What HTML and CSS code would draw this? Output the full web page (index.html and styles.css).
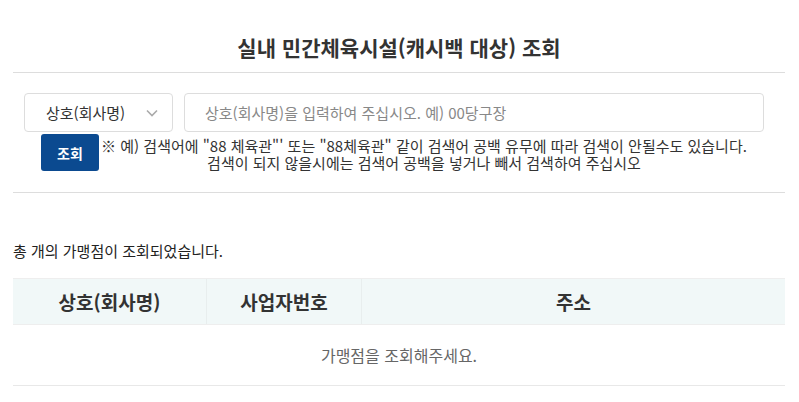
FILE: index.html
```html
<!DOCTYPE html>
<html lang="ko">
<head>
  <meta charset="UTF-8">
  <title>실내 민간체육시설(캐시백 대상) 조회</title>
  <link rel="stylesheet" href="styles.css">
</head>
<body>
  <div class="wrap">
    <h1 class="title">실내 민간체육시설(캐시백 대상) 조회</h1>

    <!-- 검색 영역 -->
    <div class="search">
      <div class="search-row">
        <div class="select">
          <span>상호(회사명)</span>
          <svg class="chev" width="12" height="8" viewBox="0 0 12 8"><path d="M1 1.5 L6 6.5 L11 1.5" fill="none" stroke="#aaa" stroke-width="1.6"/></svg>
        </div>
        <input class="keyword" type="text" placeholder="상호(회사명)을 입력하여 주십시오. 예) 00당구장">
      </div>
      <div class="search-foot">
        <button class="btn-search">조회</button>
        <p class="notice">※ 예) 검색어에 "88 체육관"' 또는 "88체육관" 같이 검색어 공백 유무에 따라 검색이 안될수도 있습니다.<br>검색이 되지 않을시에는 검색어 공백을 넣거나 빼서 검색하여 주십시오</p>
      </div>
    </div>

    <!-- 결과 영역 -->
    <p class="count">총 개의 가맹점이 조회되었습니다.</p>
    <table class="list">
      <thead>
        <tr><th class="c1">상호(회사명)</th><th class="c2">사업자번호</th><th>주소</th></tr>
      </thead>
      <tbody>
        <tr><td colspan="3" class="empty">가맹점을 조회해주세요.</td></tr>
      </tbody>
    </table>
  </div>
</body>
</html>
```

FILE: styles.css
```css
body { margin: 0; font-family: "Noto Sans CJK KR", "Noto Sans", sans-serif; color: #333; background: #fff; }
.wrap { margin: 0 14px 0 13px; }
.title { margin: 0; padding: 32px 0 10px; font-size: 21px; line-height: 30px; text-align: center; font-weight: 700; color: #333; border-bottom: 1px solid #ddd; }
.search { padding: 20px 21px 21px 11px; border-bottom: 1px solid #ddd; }
.search-row { display: flex; gap: 11px; }
.select { box-sizing: border-box; width: 149px; height: 39px; border: 1px solid #ddd; border-radius: 4px; display: flex; align-items: center; justify-content: space-between; padding: 0 14px 0 21px; font-size: 15px; color: #333; }
.chev { display: block; }
.keyword { box-sizing: border-box; flex: 1; height: 39px; border: 1px solid #ddd; border-radius: 4px; padding: 0 20px; font-family: inherit; font-size: 15px; outline: none; }
.keyword::placeholder { color: #888; }
.search-foot { display: flex; margin-top: 2px; padding-left: 17px; }
.btn-search { flex: none; width: 58px; height: 37px; border: 0; border-radius: 3px; background: #0b4a90; color: #fff; font-family: inherit; font-size: 14px; font-weight: 700; padding: 0; }
.notice { margin: 0; padding-top: 3px; width: 650px; text-align: center; font-size: 15px; line-height: 17px; color: #333; white-space: nowrap; }
.count { margin: 48px 0 17px; font-size: 15px; line-height: 20px; color: #222; }
.list { width: 100%; border-collapse: collapse; table-layout: fixed; }
.list th { height: 45px; background: #f1f8f8; font-size: 19px; font-weight: 700; color: #333; border-top: 1px solid #eee; border-bottom: 1px solid #eee; padding: 0; }
.list th + th { border-left: 1px solid #e8eeee; }
.list .c1 { width: 193px; }
.list .c2 { width: 154px; }
.list td { height: 60px; border-bottom: 1px solid #e8e8e8; padding: 0; }
.empty { text-align: center; font-size: 16px; color: #666; }
```
